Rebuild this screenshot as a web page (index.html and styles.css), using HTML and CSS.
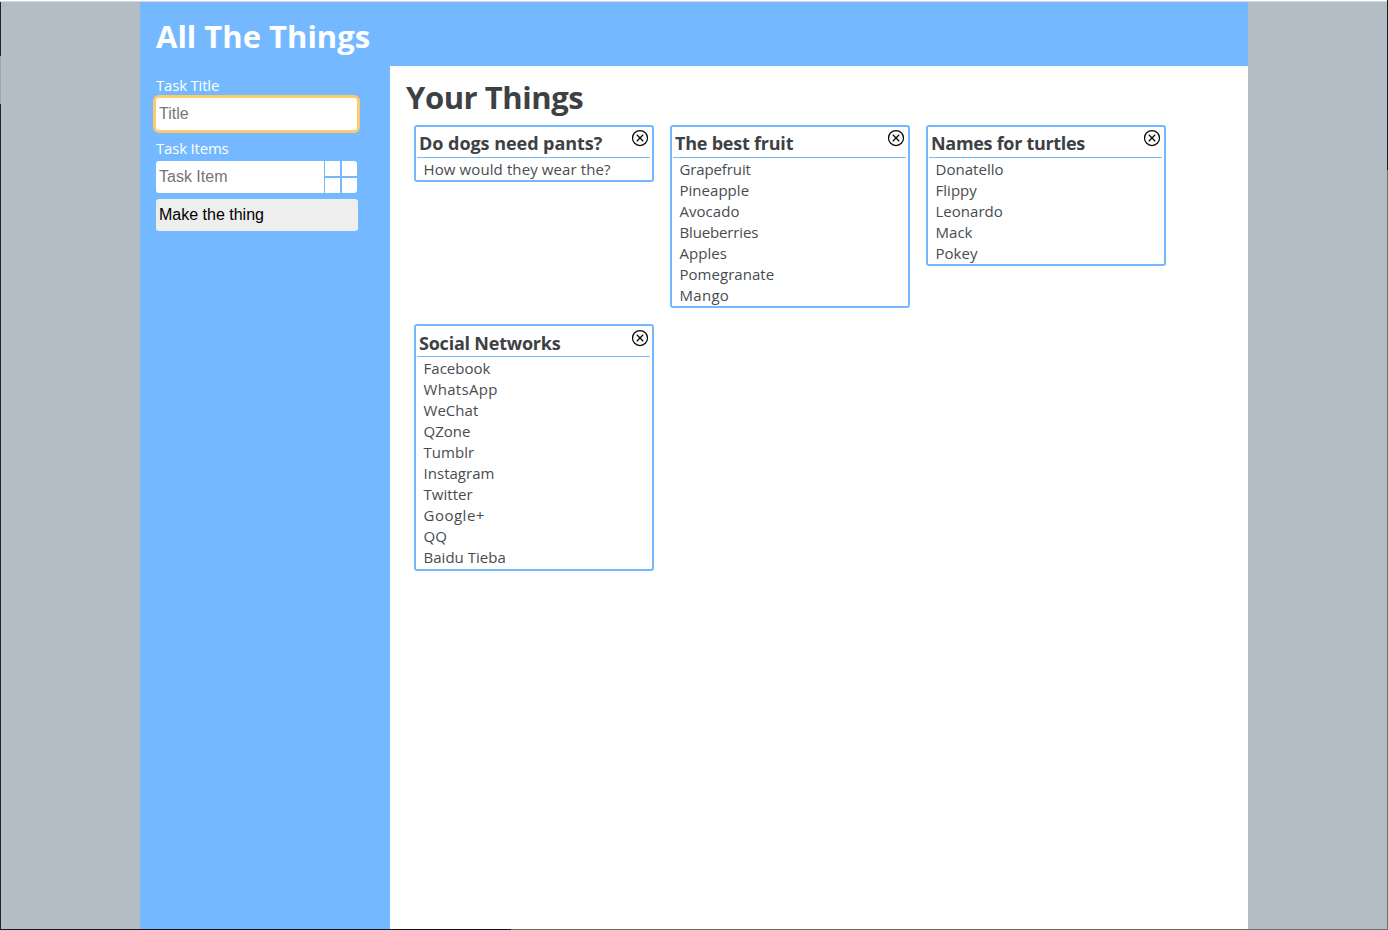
FILE: index.html
```html
<!DOCTYPE html>
<html lang="en">
<head>
<meta charset="utf-8">
<title>All The Things</title>
<link rel="stylesheet" href="styles.css">
</head>
<body>
<svg class="symbols" width="0" height="0"><symbol id="close" viewBox="0 0 18 18"><circle cx="9" cy="9" r="7.5"/><path d="M5.8 5.8l6.4 6.4M12.2 5.8l-6.4 6.4"/></symbol></svg>
<div class="page">
  <header class="header"><h1 class="brand">All The Things</h1></header>
  <div class="body">
    <aside class="sidebar">
      <label class="label" for="title">Task Title</label>
      <input class="field field-focus" id="title" placeholder="Title">
      <label class="label label-items" for="item">Task Items</label>
      <div class="item-row">
        <input class="field" id="item" placeholder="Task Item">
        <button class="add" aria-label="Add item"><i></i><i></i><i></i><i></i></button>
      </div>
      <button class="submit">Make the thing</button>
    </aside>
    <main class="main">
      <h2 class="heading">Your Things</h2>
      <div class="cards">
        <section class="card">
          <div class="card-head"><h3 class="wide">Do dogs need pants?</h3><svg class="close"><use href="#close"/></svg></div>
          <ul><li class="question">How would they wear the?</li></ul>
        </section>
        <section class="card">
          <div class="card-head"><h3>The best fruit</h3><svg class="close"><use href="#close"/></svg></div>
          <ul><li class="grapefruit">Grapefruit</li><li>Pineapple</li><li>Avocado</li><li class="blueberries">Blueberries</li><li>Apples</li><li>Pomegranate</li><li class="mango">Mango</li></ul>
        </section>
        <section class="card">
          <div class="card-head"><h3 class="tight">Names for turtles</h3><svg class="close"><use href="#close"/></svg></div>
          <ul><li>Donatello</li><li>Flippy</li><li>Leonardo</li><li>Mack</li><li>Pokey</li></ul>
        </section>
        <section class="card card-tall">
          <div class="card-head"><h3>Social Networks</h3><svg class="close"><use href="#close"/></svg></div>
          <ul><li>Facebook</li><li class="whatsapp">WhatsApp</li><li>WeChat</li><li>QZone</li><li>Tumblr</li><li>Instagram</li><li>Twitter</li><li class="google">Google+</li><li>QQ</li><li>Baidu Tieba</li></ul>
        </section>
      </div>
    </main>
  </div>
</div>
<div class="frame"></div>
</body>
</html>
```

FILE: styles.css
```css
* { box-sizing: border-box; }
body {
  margin: 0;
  height: 930px;
  overflow: hidden;
  padding-top: 2px;
  background: linear-gradient(#fff 0 1px, #d5d9db 1px 2px, #b2bec3 2px);
  font-family: "Open Sans", "Noto Sans", sans-serif;
  color: #3d4144;
}
.symbols { position: absolute; }
.page { width: 1108px; height: 928px; margin: 0 auto; display: flex; flex-direction: column; background: #74b9ff; }
.header { height: 64px; padding: 0 16px; display: flex; align-items: center; }
.brand, .heading { margin: 0; font-size: 31px; line-height: 44px; font-weight: 700; white-space: nowrap; }
.brand { color: #fff; padding-top: 4px; letter-spacing: 0; }
.body { flex: 1; display: flex; }
.sidebar { width: 250px; padding: 8px 32px 0 16px; display: flex; flex-direction: column; align-items: stretch; }
.label { color: #fff; font-size: 15px; line-height: 22px; height: 22px; letter-spacing: -0.2px; }
.label-items { line-height: 20px; }
.field {
  width: 100%; height: 32px; margin: 0; padding: 0 3px; border: 0; border-radius: 3px;
  background: #fff; font: 16px "Liberation Sans", Arial, sans-serif; outline: none;
}
.field::placeholder { color: #757575; opacity: 1; }
.field-focus { width: 201px; box-shadow: 0 0 0 3px #fdcb6e; margin: 2px 0 8px; }
.item-row { display: flex; width: 201px; height: 32px; margin: 1px 0 6px; }
.item-row .field { flex: 1; min-width: 0; border-radius: 3px 0 0 3px; }
.add {
  width: 33px; height: 32px; padding: 0 0 0 1px; border: 0; border-radius: 0 3px 3px 0; overflow: hidden;
  background: #74b9ff; display: grid; grid-template-columns: 15px 15px; grid-template-rows: 15px 15px; gap: 2px;
}
.add i { background: #fff; }
.submit {
  height: 32px; padding: 0 3px; border: 0; border-radius: 3px; background: #eee; color: #000;
  font: 16px "Liberation Sans", Arial, sans-serif; text-align: left;
}
.main { flex: 1; background: #fff; padding: 9px 16px 0; }
.heading { height: 50px; letter-spacing: -0.45px; }
.cards { display: flex; flex-wrap: wrap; align-items: flex-start; gap: 16px; padding-left: 8px; }
.card { width: 240px; border: 2px solid #74b9ff; border-radius: 3px; }
.card-head { height: 31px; margin: 0 2px 1px 1px; border-bottom: 1px solid #74b9ff; display: flex; justify-content: space-between; padding: 0 1px 0 2px; }
.card h3 { margin: 0; font-size: 18px; line-height: 32px; font-weight: 700; white-space: nowrap; letter-spacing: -0.22px; }
.card h3.wide { letter-spacing: -0.04px; }
.card h3.tight { letter-spacing: -0.3px; }
.close { width: 18px; height: 18px; margin-top: 2px; fill: none; stroke: #000; stroke-width: 1.25; }
.card ul { margin: 0; padding: 0 0 0 7.5px; list-style: none; }
.card li { height: 21px; line-height: 21px; font-size: 15px; color: #484c4f; letter-spacing: 0.03px; white-space: nowrap; }
.card li.question { letter-spacing: 0.11px; }
.card li.google { letter-spacing: 0.5px; }
.card li.grapefruit { letter-spacing: -0.12px; }
.card li.blueberries { letter-spacing: -0.15px; }
.card li.mango, .card li.whatsapp { letter-spacing: 0.3px; }
.card-tall { padding-bottom: 1px; }
.card-tall h3 { padding-top: 1px; }
.card-tall .close { margin-top: 3px; }
/* thin window edge around the viewport */
.frame {
  position: absolute; inset: 0; pointer-events: none;
  background:
    linear-gradient(90deg, #17151a 0 511px, #6c6c6c 511px) 0 100% / 100% 1px no-repeat,
    linear-gradient(#24242e 0 54px, #a5a5a5 54px 102px, #24242e 102px) 0 2px / 1px 100% no-repeat,
    linear-gradient(#17172a 0 170px, #6c6c6c 170px) 100% 0 / 1px 100% no-repeat;
}
```
